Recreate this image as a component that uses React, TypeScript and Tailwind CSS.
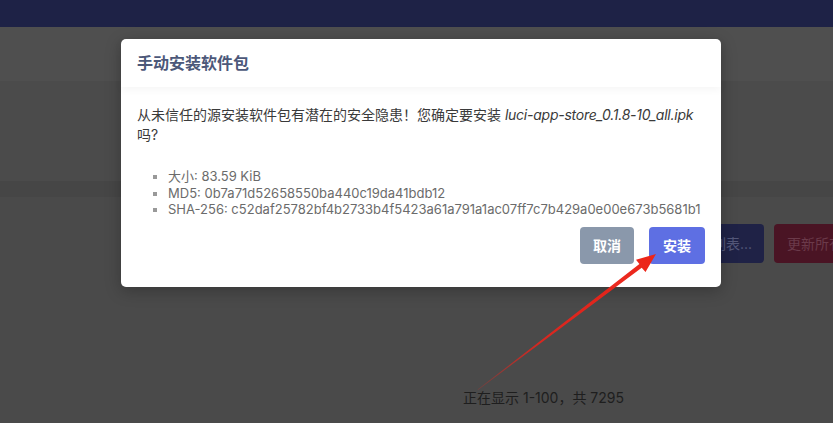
import React from 'react';

const font = { fontFamily: 'Inter, "Noto Sans CJK SC", sans-serif' };

//====================================== page behind the overlay
const Page = () => (
  <div className="flex h-[423px] w-[833px] flex-col overflow-hidden bg-[#4a4a4a]" style={font}>
    <div className="h-[27px] bg-[#1e2246]" />
    <div className="h-[54px] bg-[#4f4f4f]" />
    <div className="h-[100px] bg-[#4b4b4b]" />
    <div className="h-[16px] bg-[#464646]" />
    <div className="flex flex-1 flex-col">
      <div className="mt-[27px] flex gap-[10px] pl-[680px]">
        <div className="flex h-[39px] w-[84px] shrink-0 items-center justify-end whitespace-nowrap rounded-[4px] bg-[#1f2246] pr-[12px] text-[14px] text-[#54587a]">
          更新列表...
        </div>
        <div className="flex h-[39px] w-[130px] shrink-0 items-center whitespace-nowrap rounded-[4px] bg-[#4a1424] pl-[13px] text-[14px] text-[#6b3a4a]">
          更新所有软件包
        </div>
      </div>
      <div className="mt-[125px] pl-[463px] text-[14px] leading-[20px] text-[#1e1e1e]">
        正在显示 1-100，共 7295
      </div>
    </div>
  </div>
);

//====================================== modal
const Modal = () => (
  <div
    className="absolute left-[121px] top-[39px] w-[600px] rounded-[5px] bg-white shadow-[0_4px_16px_rgba(0,0,0,0.25)]"
    style={font}
  >
    <div className="flex h-[48px] items-center px-[16px] shadow-[0_3px_8px_rgba(0,0,0,0.04)]">
      <h3 className="text-[16px] font-semibold text-[#4c5879]">手动安装软件包</h3>
    </div>
    <div className="px-[16px] pb-[23px] pt-[18px]">
      <p className="text-[14px] leading-[20px] text-[#3a3a3a]">
        从未信任的源安装软件包有潜在的安全隐患！您确定要安装{' '}
        <em className="tracking-[-0.25px]">luci-app-store_0.1.8-10_all.ipk</em> 吗?
      </p>
      <ul className="mt-[23px] list-[square] whitespace-nowrap pl-[31px] text-[13px] leading-[16.5px] text-[#6b6b6b] marker:text-[#999]">
        <li>大小: 83.59 KiB</li>
        <li>MD5: 0b7a71d52658550ba440c19da41bdb12</li>
        <li>SHA-256: c52daf25782bf4b2733b4f5423a61a791a1ac07ff7c7b429a0e00e673b5681b1</li>
      </ul>
      <div className="mt-[9px] flex justify-end gap-[15px]">
        <button className="h-[37px] rounded-[4px] bg-[#8a98ab] px-[13px] text-[14px] font-semibold text-white">取消</button>
        <button className="h-[37px] rounded-[4px] bg-[#5e6fe3] px-[14px] text-[14px] font-semibold text-white">安装</button>
      </div>
    </div>
  </div>
);

//====================================== annotation arrow
const Arrow = () => (
  <svg className="pointer-events-none absolute left-0 top-0" width="833" height="423">
    <defs>
      <linearGradient id="arrowFade" x1="478" y1="390" x2="655" y2="255" gradientUnits="userSpaceOnUse">
        <stop offset="0" stopColor="#e8231b" stopOpacity="0.25" />
        <stop offset="0.35" stopColor="#e8231b" stopOpacity="0.9" />
        <stop offset="1" stopColor="#ec2418" />
      </linearGradient>
    </defs>
    <polygon
      points="478,390 641.7,267.8 645.5,272 656,254 636,259.8 639.4,264.1 477.6,389.6"
      fill="url(#arrowFade)"
    />
  </svg>
);

export default function App() {
  return (
    <div className="relative h-[423px] w-[833px] overflow-hidden">
      <Page />
      <Modal />
      <Arrow />
    </div>
  );
}
